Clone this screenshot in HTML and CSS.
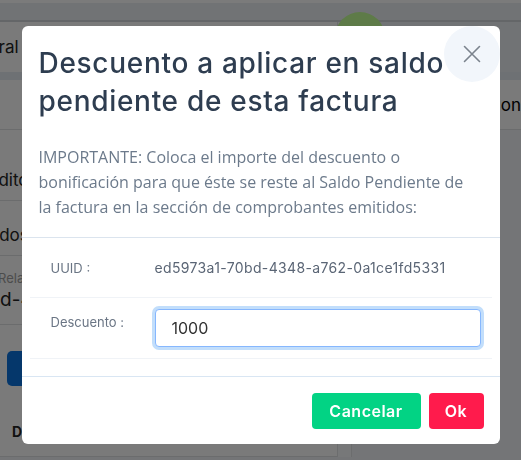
FILE: index.html
```html
<!DOCTYPE html>
<html lang="es">
<head>
<meta charset="utf-8">
<title>Descuento</title>
<link rel="stylesheet" href="styles.css">
</head>
<body>
<div class="page">
  <div class="topstrip"></div>
  <div class="header"><span class="avatar"></span></div>
  <div class="content">
    <div class="leftcol">
      <div class="tabrow"><span class="shift-general">General</span></div>
      <div class="gapband"></div>
      <div class="row r1"><span class="shift-os">Datos</span></div>
      <div class="row r2 bottom"><span class="shift-dito">Crédito</span></div>
      <div class="row r3 bottom"><span class="shift-dos">Resultados</span></div>
      <div class="row r4">
        <span class="small shift-rela">Relacionado</span>
        <span class="big shift-uuid">70bd-4348</span>
      </div>
      <div class="row r5">
        <span class="bluebtn"></span>
        <span class="bold">D</span>
      </div>
    </div>
    <div class="sidegap"></div>
    <div class="rightcol">
      <div class="tabrow light"></div>
      <div class="gapband"></div>
      <div class="row r1 rightrow"><span>Con</span></div>
    </div>
  </div>
</div>

<div class="overlay">
  <div class="modal">
    <button class="close" type="button" aria-label="Cerrar">
      <svg width="18" height="18" viewBox="0 0 18 18"><path d="M1.5 1.5 L16.5 16.5 M16.5 1.5 L1.5 16.5" stroke="#7b838d" stroke-width="1.6" fill="none" stroke-linecap="round"/></svg>
    </button>
    <div class="modal-header">
      <h2 class="title">Descuento a aplicar en saldo<br>pendiente de esta factura</h2>
    </div>
    <p class="note">IMPORTANTE: Coloca el importe del descuento o bonificación para que éste se reste al Saldo Pendiente de la factura en la sección de comprobantes emitidos:</p>
    <div class="modal-body">
      <div class="field">
        <span class="label">UUID :</span>
        <span class="value">ed5973a1-70bd-4348-a762-0a1ce1fd5331</span>
      </div>
      <div class="field">
        <span class="label label-top">Descuento :</span>
        <input class="input" type="text" value="1000">
      </div>
    </div>
    <div class="modal-footer">
      <button class="btn btn-cancel" type="button">Cancelar</button>
      <button class="btn btn-ok" type="button">Ok</button>
    </div>
  </div>
</div>
</body>
</html>
```
FILE: styles.css
```css
* { box-sizing: border-box; }
html, body { margin: 0; padding: 0; }
body {
  width: 521px;
  height: 460px;
  overflow: hidden;
  background: #e8ebee;
  font-family: "Inter", "DejaVu Sans", sans-serif;
  position: relative;
}

/* background page */
.page { width: 521px; height: 460px; }
.topstrip { height: 3px; background: #f6f6f6; }
.header {
  height: 19px;
  background: #e3e7ea;
  border-bottom: 2px solid #c9cdd0;
  position: relative;
}
.avatar {
  position: absolute;
  left: 335px; top: 9px;
  width: 50px; height: 50px;
  border-radius: 50%;
  background: #bcf690;
}
.content { display: flex; }
.leftcol { width: 345px; background: #f4f4f4; color: #222; }
.sidegap { width: 16px; background: #eef0f2; border-left: 1px solid #d8dadc; border-right: 1px solid #d8dadc; }
.rightcol { flex: 1; }
.tabrow { height: 50px; background: #f4f4f4; font-size: 17px; display: flex; align-items: center; overflow: hidden; white-space: nowrap; }
.tabrow.light { background: #e3e7ea; }
.gapband { height: 8px; background: #dde3e9; }
.row { border-bottom: 1px solid #d6d8da; display: flex; align-items: center; overflow: hidden; white-space: nowrap; font-size: 17px; }
.row.bottom { align-items: flex-end; padding-bottom: 10px; }
.r1 { height: 50px; }
.r2 { height: 71px; }
.r3 { height: 55px; }
.r4 { height: 69px; flex-direction: column; align-items: flex-start; justify-content: center; gap: 2px; }
.r5 { height: 132px; flex-direction: column; align-items: flex-start; justify-content: flex-start; }
.rightrow { background: #f4f4f4; padding-left: 497px; margin-left: -361px; }
.rightrow span { font-size: 17px; }
.shift-general { margin-left: -44px; }
.shift-os { margin-left: -33px; }
.shift-dito { margin-left: -30px; }
.shift-dos { margin-left: -60px; }
.small { font-size: 13px; color: #999; margin-left: -2px; }
.big { font-size: 19px; margin-left: -34px; }
.bluebtn { display: block; margin: 26px 0 0 7px; width: 80px; height: 35px; border-radius: 5px; background: #0a6fd6; }
.bold { font-weight: 700; font-size: 14px; margin: 37px 0 0 12px; }

/* overlay + modal */
.overlay {
  position: fixed;
  inset: 0;
  background: rgba(0, 0, 0, 0.5);
  display: flex;
  justify-content: center;
  align-items: flex-start;
  padding-top: 26px;
}
.modal {
  position: relative;
  width: 478px;
  background: #fff;
  border-radius: 6px;
  overflow: hidden;
}
.close {
  position: absolute;
  top: 0; right: 0;
  width: 56px; height: 56px;
  border: 0;
  border-radius: 50%;
  background: #f2f6fb;
  display: flex;
  align-items: center;
  justify-content: center;
  padding: 0;
}
.modal-header { padding: 18px 17px 0; }
.title {
  margin: 0;
  font-family: "Inter", sans-serif;
  font-weight: 500;
  font-size: 28px;
  letter-spacing: 0.7px;
  line-height: 38px;
  color: #2e3d50;
}
.note {
  margin: 25px 0 0;
  padding: 0 26px 17px 17px;
  font-family: "Open Sans", sans-serif;
  font-size: 16px;
  line-height: 25px;
  color: #6c7a8b;
  border-bottom: 1px solid #dbe4ee;
}
.modal-body { padding: 0 8px 17px; border-bottom: 1px solid #d9e6f3; }
.field {
  display: flex;
  align-items: center;
  border-bottom: 1px solid #f0f3f7;
  font-family: "Inter", sans-serif;
  font-size: 13px;
  color: #6a7584;
}
.field:first-child { height: 60px; }
.field:last-child { height: 61px; }
.label { width: 125px; padding-left: 21px; flex: none; }
.label-top { align-self: flex-start; padding-top: 16px; }
.value { color: #5a6575; font-size: 14px; letter-spacing: 0.35px; }
.input {
  width: 326px;
  height: 38px;
  border: 1px solid #86b7fe;
  border-radius: 4px;
  box-shadow: 0 0 0 3px #c2defb;
  padding: 0 16px;
  font-family: "Inter", sans-serif;
  font-size: 16px;
  color: #333;
  outline: none;
}
.modal-footer {
  display: flex;
  justify-content: flex-end;
  gap: 8px;
  padding: 16px 16px 15px;
}
.btn {
  height: 36px;
  border: 0;
  border-radius: 4px;
  font-family: "Inter", sans-serif;
  font-weight: 600;
  font-size: 16px;
  letter-spacing: 0.5px;
  color: #fff;
  padding: 0;
}
.btn-cancel { background: #02d384; width: 109px; }
.btn-ok { background: #ff1b4c; width: 55px; }
```
